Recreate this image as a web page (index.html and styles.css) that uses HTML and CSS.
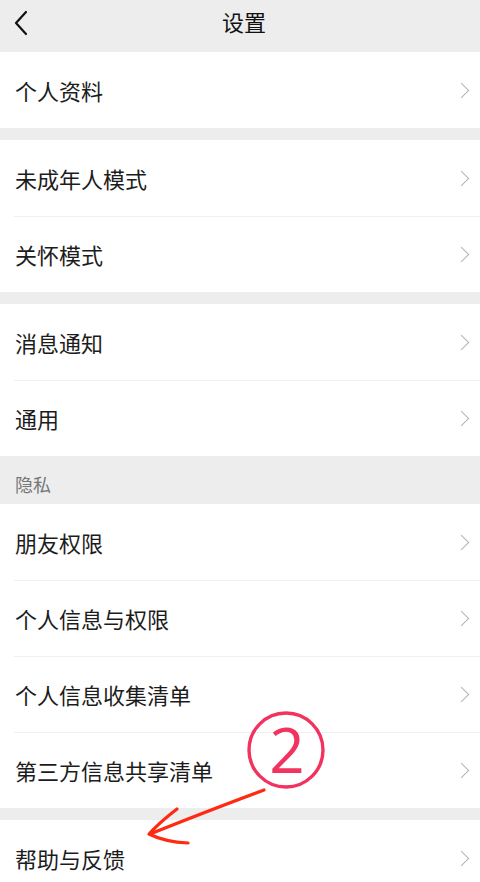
FILE: index.html
```html
<!DOCTYPE html>
<html lang="zh-CN">
<head>
<meta charset="utf-8">
<title>设置</title>
<link rel="stylesheet" href="styles.css">
</head>
<body>
<div class="page">
  <header class="topbar">
    <span class="back">
      <svg width="16" height="26" viewBox="0 0 16 26"><path d="M13 2 L3 13 L13 24" fill="none" stroke="#111" stroke-width="2.2" stroke-linecap="round" stroke-linejoin="round"/></svg>
    </span>
    <h1 class="title">设置</h1>
  </header>

  <section class="group">
    <div class="row"><span class="label">个人资料</span><span class="chev"></span></div>
  </section>
  <div class="gap"></div>

  <section class="group">
    <div class="row"><span class="label">未成年人模式</span><span class="chev"></span></div>
    <div class="row"><span class="label">关怀模式</span><span class="chev"></span></div>
  </section>
  <div class="gap"></div>

  <section class="group">
    <div class="row"><span class="label">消息通知</span><span class="chev"></span></div>
    <div class="row"><span class="label">通用</span><span class="chev"></span></div>
  </section>
  <div class="section-title">隐私</div>

  <section class="group">
    <div class="row"><span class="label">朋友权限</span><span class="chev"></span></div>
    <div class="row"><span class="label">个人信息与权限</span><span class="chev"></span></div>
    <div class="row"><span class="label">个人信息收集清单</span><span class="chev"></span></div>
    <div class="row"><span class="label">第三方信息共享清单</span><span class="chev"></span></div>
  </section>
  <div class="gap"></div>

  <section class="group">
    <div class="row"><span class="label">帮助与反馈</span><span class="chev"></span></div>
  </section>

  <svg class="annot" width="480" height="882" viewBox="0 0 480 882">
    <g>
      <circle cx="286" cy="750" r="37" fill="none" stroke="#f2335f" stroke-width="3.4"/>
      <text x="287" y="773" text-anchor="middle" class="num">2</text>
    </g>
    <g fill="none" stroke="#ff2a12" stroke-width="3.2" stroke-linecap="round" stroke-linejoin="round">
      <path d="M264 790 Q210 810 150 834"/>
      <path d="M177 809 Q160 822 149 834 Q165 842 188 843"/>
    </g>
  </svg>
</div>
</body>
</html>
```

FILE: styles.css
```css
* { box-sizing: border-box; }
html, body { margin: 0; padding: 0; }
body {
  background: #ededed;
  font-family: "Noto Sans CJK SC", "Noto Sans", sans-serif;
  color: #1a1a1a;
  overflow: hidden;
}
.page {
  position: relative;
  width: 480px;
  height: 882px;
  overflow: hidden;
  background: #ededed;
}
.topbar {
  height: 52px;
  display: flex;
  align-items: center;
  justify-content: center;
  position: relative;
  background: #ededed;
}
.back {
  position: absolute;
  left: 13px;
  top: 10px;
  display: flex;
}
.title {
  margin: 0 0 10px 8px;
  font-size: 22px;
  font-weight: 400;
  color: #111;
  line-height: 1;
}
.group {
  background: #fff;
}
.row {
  height: 76px;
  display: flex;
  align-items: center;
  justify-content: space-between;
  padding: 0 11px 0 15px;
  position: relative;
}
.row + .row::before {
  content: "";
  position: absolute;
  top: 0;
  left: 14px;
  right: 0;
  height: 1px;
  background: #efefef;
}
.label {
  font-size: 22px;
  line-height: 1;
  color: #1c1c1c;
}
.chev {
  width: 11px;
  height: 11px;
  border-top: 1.8px solid #b3b3b3;
  border-right: 1.8px solid #b3b3b3;
  transform: rotate(45deg);
  margin-right: 2px;
}
.gap {
  height: 12px;
  background: #ededed;
}
.section-title {
  height: 48px;
  padding: 19px 15px 0;
  font-size: 18px;
  line-height: 1;
  color: #777;
  background: #ededed;
}
.annot {
  position: absolute;
  left: 0;
  top: 0;
  pointer-events: none;
}
.num {
  font-family: "Open Sans", "Liberation Sans", sans-serif;
  font-weight: 400;
  font-size: 62px;
  fill: #f2335f;
}
```
